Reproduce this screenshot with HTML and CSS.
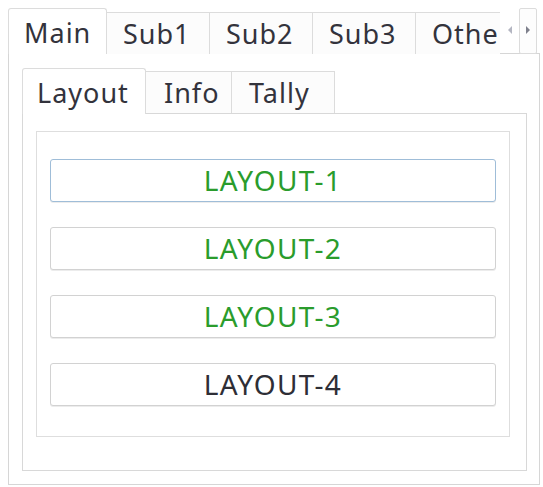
FILE: index.html
```html
<!DOCTYPE html>
<html>
<head>
<meta charset="utf-8">
<link rel="stylesheet" href="styles.css">
</head>
<body>
<div class="outer">
  <div class="tabbar">
    <div class="tabs">
      <div class="tab main-tab selected">Main</div>
      <div class="tab">Sub1</div>
      <div class="tab">Sub2</div>
      <div class="tab">Sub3</div>
      <div class="tab">Other</div>
    </div>
    <div class="scroll">
      <div class="arrow left-arrow">
        <svg width="6" height="10" viewBox="0 0 6 10"><polygon points="5,1 1,5 5,9" fill="#b4b6c2"/></svg>
      </div>
      <div class="arrow right-arrow">
        <svg width="6" height="10" viewBox="0 0 6 10"><polygon points="1,1 5,5 1,9" fill="#7e808c"/></svg>
      </div>
    </div>
  </div>
  <div class="pane">
    <div class="inner">
      <div class="tabbar inner-bar">
        <div class="tab layout-tab selected">Layout</div>
        <div class="tab info-tab">Info</div>
        <div class="tab tally-tab">Tally</div>
      </div>
      <div class="inner-pane">
        <div class="frame">
          <div class="btn focus green">LAYOUT-1</div>
          <div class="btn green">LAYOUT-2</div>
          <div class="btn green">LAYOUT-3</div>
          <div class="btn">LAYOUT-4</div>
        </div>
      </div>
    </div>
  </div>
</div>
</body>
</html>
```

FILE: styles.css
```css
* { box-sizing: border-box; }
html, body { margin: 0; padding: 0; background: #ffffff; }
body {
  font-family: "Noto Sans", "Liberation Sans", sans-serif;
  color: #33333c;
}
.outer {
  margin: 8px 0 0 8px;
  width: 532px;
}
.tabbar {
  display: flex;
  align-items: flex-end;
  height: 45px;
}
.tabs {
  display: flex;
  align-items: flex-end;
  width: 492px;
  height: 46px;
  overflow: hidden;
  flex: none;
  align-self: flex-start;
}
.tab {
  flex: none;
  height: 42px;
  width: 103px;
  border: 1px solid #dcdcdc;
  border-bottom: none;
  border-left: none;
  background: #fcfcfc;
  font-size: 27px;
  letter-spacing: 1px;
  line-height: 37px;
  padding: 2px 0 0 16px;
  white-space: nowrap;
  overflow: hidden;
}
.tab.selected {
  height: 46px;
  background: #ffffff;
  border-left: 1px solid #dcdcdc;
  border-top-left-radius: 3px;
  border-top-right-radius: 3px;
  padding-top: 5px;
  position: relative;
  z-index: 2;
}
.main-tab { width: 99px; padding-left: 15px; }
.tabs .tab:last-child { border-right: none; }
.scroll {
  display: flex;
  align-self: flex-start;
  height: 46px;
  width: 37px;
}
.arrow {
  display: flex;
  align-items: center;
  justify-content: center;
  height: 46px;
}
.left-arrow { width: 19px; padding-bottom: 2px; }
.right-arrow {
  width: 18px;
  border: 1px solid #dcdcdc;
  border-radius: 2px;
  background: #fdfdfd;
  padding-bottom: 2px;
}
.pane {
  height: 432px;
  border: 1px solid #d6d6d6;
  padding: 14px 12px 13px 13px;
  background: #ffffff;
}
.inner-bar { height: 45px; }
.layout-tab { width: 124px; padding-left: 14px; }
.info-tab { width: 86px; height: 42px; padding-left: 18px; }
.tally-tab { width: 103px; height: 42px; padding-left: 17px; }
.inner .tab.selected { margin-bottom: -1px; }
.tabs .tab.selected { height: 46px; align-self: flex-start; }
.inner-pane {
  border: 1px solid #d8d8d8;
  height: 358px;
  padding: 17px 16px 0 13px;
}
.frame {
  border: 1px solid #dedede;
  height: 306px;
  padding: 27px 13px 0 13px;
  display: flex;
  flex-direction: column;
  gap: 25px;
}
.btn {
  height: 43px;
  border: 1px solid #d2d2d2;
  border-radius: 3px;
  background: #ffffff;
  text-align: center;
  font-size: 28px;
  letter-spacing: 1.3px;
  line-height: 41px;
  color: #2e2e36;
  box-shadow: 0 1px 0 #ececec;
}
.btn.green { color: #2a9c2c; }
.btn.focus { border-color: #9fbdd8; }
```
